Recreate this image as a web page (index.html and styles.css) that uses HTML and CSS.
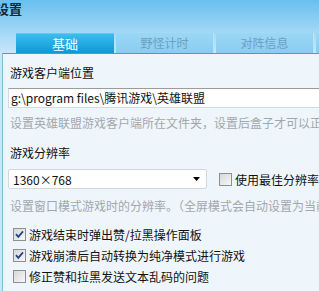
FILE: index.html
```html
<!DOCTYPE html>
<html lang="zh-CN">
  <head>
    <meta charset="UTF-8" />
    <title>设置</title>
    <link rel="stylesheet" href="styles.css">
  </head>
  <body>
    <div class="window">
      <div class="header">
        <div class="title">设置</div>
      </div>

      <div class="tabs">
        <div class="tab active">基础</div>
        <div class="tab">野怪计时</div>
        <div class="tab">对阵信息</div>
        <div class="tab"></div>
      </div>

      <div class="panel">
        <div class="label">游戏客户端位置</div>
        <div class="input">g:\program files\腾讯游戏\英雄联盟</div>
        <div class="hint">设置英雄联盟游戏客户端所在文件夹，设置后盒子才可以正确启动游戏</div>

        <div class="label section">游戏分辨率</div>
        <div class="res-row">
          <div class="select">
            <span>1360×768</span>
            <svg class="arrow" width="7" height="4" viewBox="0 0 7 4"><path d="M0 0h7L3.5 4z" fill="#000"/></svg>
          </div>
          <div class="check res-check">
            <svg class="box" width="13" height="13" viewBox="0 0 13 13">
              <defs>
                <linearGradient id="bg1" x1="0" y1="0" x2="1" y2="1">
                  <stop offset="0" stop-color="#d6d6d6"/>
                  <stop offset="1" stop-color="#f9f9f9"/>
                </linearGradient>
              </defs>
              <rect x="0.5" y="0.5" width="12" height="12" fill="url(#bg1)" stroke="#8e8f8f"/>
            </svg>
            <span>使用最佳分辨率</span>
          </div>
        </div>
        <div class="hint">设置窗口模式游戏时的分辨率。（全屏模式会自动设置为当前分辨率）</div>

        <div class="checks">
          <div class="check">
            <svg class="box" width="13" height="13" viewBox="0 0 13 13">
              <rect x="0.5" y="0.5" width="12" height="12" fill="url(#bg1)" stroke="#8e8f8f"/>
              <path d="M3 6.2l2.3 2.6L10 3.4" fill="none" stroke="#22448a" stroke-width="1.8"/>
            </svg>
            <span>游戏结束时弹出赞/拉黑操作面板</span>
          </div>
          <div class="check">
            <svg class="box" width="13" height="13" viewBox="0 0 13 13">
              <rect x="0.5" y="0.5" width="12" height="12" fill="url(#bg1)" stroke="#8e8f8f"/>
              <path d="M3 6.2l2.3 2.6L10 3.4" fill="none" stroke="#22448a" stroke-width="1.8"/>
            </svg>
            <span>游戏崩溃后自动转换为纯净模式进行游戏</span>
          </div>
          <div class="check">
            <svg class="box" width="13" height="13" viewBox="0 0 13 13">
              <rect x="0.5" y="0.5" width="12" height="12" fill="url(#bg1)" stroke="#8e8f8f"/>
            </svg>
            <span>修正赞和拉黑发送文本乱码的问题</span>
          </div>
        </div>
      </div>
    </div>
  </body>
</html>
```

FILE: styles.css
```css
body {
  margin: 0;
  padding: 0;
  font-family: "Noto Sans CJK SC", "Noto Sans", sans-serif;
  font-size: 12px;
  color: #111;
  background: #c8e7fa;
  overflow: hidden;
}

.window {
  width: 319px;
  height: 291px;
  overflow: hidden;
  background: linear-gradient(#68c0ef 0, #9fd6f6 30px, #c8e7fa 53px, #c8e7fa 100%);
}

.header {
  height: 33px;
}

.title {
  margin-left: -4px;
  font-size: 13px;
  font-weight: bold;
  line-height: 18px;
  color: #16283a;
}

/* tabs */
.tabs {
  display: flex;
  gap: 2px;
  padding-left: 16px;
  height: 20px;
}

.tab {
  flex: 0 0 98px;
  height: 20px;
  line-height: 20px;
  text-align: center;
  color: #6f9fc0;
  background: linear-gradient(#9bd7f5, #88cdf1);
  box-sizing: border-box;
  border-right: 1px solid #b9e3f8;
}

.tab.active {
  color: #fff;
  font-size: 13px;
  background: linear-gradient(#3cbdee, #0c98d8);
  border-top: 1px solid #5ccbf2;
  border-right: 0;
  line-height: 19px;
}

/* panel */
.panel {
  margin-left: 2px;
  border-top: 1px solid #4f9fae;
  border-left: 1px solid #84bccc;
  background: #eef6fc;
  padding: 11px 0 0 5px;
  height: 240px;
}

.label {
  padding-left: 2px;
  line-height: 16px;
  white-space: nowrap;
}

.label.section {
  margin-top: 14px;
}

.input {
  margin-top: 7px;
  width: 400px;
  height: 20px;
  box-sizing: border-box;
  background: #fff;
  border: 1px solid #d3dbe2;
  border-top-color: #9b9b9b;
  padding-left: 2px;
  line-height: 18px;
  white-space: nowrap;
}

.hint {
  margin-top: 7px;
  padding-left: 2px;
  line-height: 16px;
  color: #a3a7ab;
  white-space: nowrap;
}

.res-row {
  display: flex;
  align-items: center;
  margin-top: 8px;
  height: 20px;
}

.res-row + .hint {
  margin-top: 9px;
}

.select {
  width: 207px;
  height: 20px;
  box-sizing: border-box;
  background: #fff;
  border: 1px solid #d0d7de;
  border-radius: 2px;
  padding: 0 4px;
  display: flex;
  align-items: center;
  justify-content: space-between;
}

.select .arrow {
  margin-right: 2px;
}

.check {
  display: flex;
  align-items: center;
  gap: 3px;
  height: 21px;
  white-space: nowrap;
}

.check .box {
  flex: none;
}

.res-check {
  margin-left: 12px;
}

.checks {
  margin-top: 10px;
  padding-left: 5px;
}
```
